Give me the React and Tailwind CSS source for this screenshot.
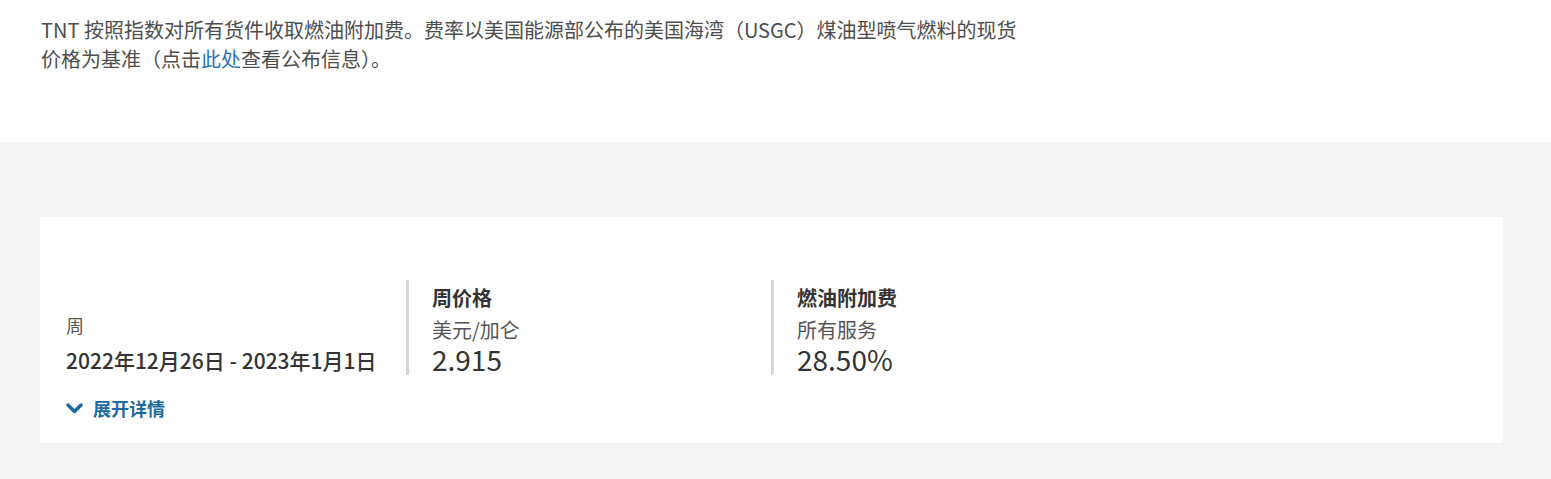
const FONT = "font-['Noto_Sans_CJK_SC','Noto_Sans',sans-serif]";

const ChevronDown = () => (
  <svg width="17" height="11" viewBox="0 0 17 11" fill="none" className="shrink-0">
    <polyline points="2,2 8.5,8.5 15,2" stroke="#1b6aa3" strokeWidth="3.5" strokeLinecap="round" strokeLinejoin="round" />
  </svg>
);

const StatColumn = ({ title, unit, value }) => (
  <div className="w-[365px] border-l-[3px] border-[#d6d6d6] pl-[23px]">
    <div className="text-[20px] leading-[36px] font-bold text-[#333]">{title}</div>
    <div className="text-[20px] leading-[28px] text-[#555]">{unit}</div>
    <div className="text-[28px] leading-[31px] text-[#333]">{value}</div>
  </div>
);

export default function App() {
  return (
    <div className={`${FONT} bg-white`}>
      <section className="h-[142px] bg-white pl-[41px] pt-[15px]">
        <p className="max-w-[985px] text-[20px] leading-[29px] text-[#4d4d4d]">
          TNT 按照指数对所有货件收取燃油附加费。费率以美国能源部公布的美国海湾（USGC）煤油型喷气燃料的现货价格为基准（点击
          <a href="#" className="text-[#2a73b8]">此处</a>
          查看公布信息）。
        </p>
      </section>

      <section className="bg-[#f4f4f4] pt-[75px] pb-[36px] pl-[40px] pr-[48px]">
        <div className="bg-white h-[226px] pl-[26px] pt-[63px]">
          <div className="flex items-end">
            <div className="w-[340px]">
              <div className="mb-[6px] text-[18px] leading-[28px] text-[#555]">周</div>
              <div className="text-[21px] leading-[30px] font-medium text-[#333]">
                2022年12月26日 - 2023年1月1日
              </div>
            </div>
            <StatColumn title="周价格" unit="美元/加仑" value="2.915" />
            <StatColumn title="燃油附加费" unit="所有服务" value="28.50%" />
          </div>
          <button className="mt-[20px] flex items-center gap-[10px] text-[18px] leading-[27px] font-bold text-[#1b6aa3]">
            <ChevronDown />
            展开详情
          </button>
        </div>
      </section>
    </div>
  );
}
